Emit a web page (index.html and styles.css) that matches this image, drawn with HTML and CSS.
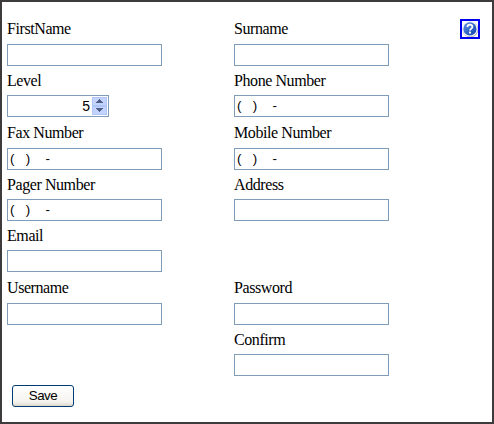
FILE: index.html
```html
<!DOCTYPE html>
<html lang="en">
<head>
<meta charset="utf-8">
<title>Registration</title>
<link rel="stylesheet" href="styles.css">
</head>
<body>
<form class="panel">
  <div class="fields">
    <label class="field first"><span class="name">FirstName</span><input class="box" type="text"></label>
    <label class="field first"><span class="name">Surname</span><input class="box" type="text"></label>
    <label class="field"><span class="name">Level</span><span class="box spinner"><span class="value">5</span><span class="arrows">
      <svg class="arrow" viewBox="0 0 15 9" shape-rendering="crispEdges"><path d="M7 2h1v1h1v1h1v1h1v1H4V5h1V4h1V3h1z"/></svg>
      <svg class="arrow" viewBox="0 0 15 9" shape-rendering="crispEdges"><path d="M4 2h7v1h-1v1H9v1H8v1H7V5H6V4H5V3H4z"/></svg>
    </span></span></label>
    <label class="field"><span class="name">Phone Number</span><input class="box" type="text" value="(   )    -"></label>
    <label class="field"><span class="name">Fax Number</span><input class="box" type="text" value="(   )    -"></label>
    <label class="field"><span class="name">Mobile Number</span><input class="box" type="text" value="(   )    -"></label>
    <label class="field"><span class="name">Pager Number</span><input class="box" type="text" value="(   )    -"></label>
    <label class="field"><span class="name">Address</span><input class="box" type="text"></label>
    <label class="field wide"><span class="name">Email</span><input class="box" type="text"></label>
    <label class="field"><span class="name">Username</span><input class="box" type="text"></label>
    <label class="field"><span class="name">Password</span><input class="box" type="password"></label>
    <label class="field second"><span class="name">Confirm</span><input class="box" type="password"></label>
  </div>
  <a class="help">
    <svg width="16" height="16" viewBox="0 0 16 16">
      <defs><linearGradient id="g" x1="0" y1="0" x2="1" y2="1"><stop offset="0" stop-color="#5e93e4"/><stop offset="1" stop-color="#0c3fae"/></linearGradient></defs>
      <rect width="16" height="16" fill="#fff"/>
      <circle cx="8.3" cy="8.4" r="8" fill="#b4b7bd"/>
      <circle cx="7.9" cy="7.9" r="7.7" fill="#f5f6f8"/>
      <circle cx="7.9" cy="7.9" r="6.6" fill="url(#g)"/>
      <path d="M5.4 6.1C5.5 2.8 10.5 2.9 10.4 5.9c0 1.7-2.4 1.8-2.4 3.7" fill="none" stroke="#fff" stroke-width="1.8"/>
      <rect x="7" y="10.6" width="2" height="1.9" fill="#fff"/>
    </svg>
  </a>
  <button class="save" type="button">Save</button>
</form>
</body>
</html>
```
FILE: styles.css
```css
* { box-sizing: border-box; }
body { margin: 0; background: #fff; }
.panel {
  width: 494px;
  height: 424px;
  border: 2px solid #3d3b3c;
  padding: 13px 12px 0 5px;
  display: grid;
  grid-template-columns: 382px 1fr;
  grid-template-rows: 361px 1fr;
  font: 16px "Liberation Serif", serif;
  color: #000;
}
.fields {
  display: grid;
  grid-template-columns: 227px 155px;
  grid-template-rows: 51px 51px 53px 51px 51px 53px 51px;
}
.field { display: flex; flex-direction: column; }
.wide { grid-column: 1 / 3; }
.second { grid-column: 2; }
.name {
  flex: 1;
  line-height: 29px;
  display: flex;
  align-items: center;
  white-space: nowrap;
  letter-spacing: -0.42px;
}
.first .name { line-height: 27px; padding-bottom: 2px; }
.box {
  width: 155px;
  height: 22px;
  border: 1px solid #7f9db9;
  border-radius: 0;
  background: #fff;
  padding: 0 2px 1px;
  outline: none;
  font: 13.33px "Liberation Sans", sans-serif;
  color: #000;
  word-spacing: 0.1px;
}
.spinner {
  width: 102px;
  display: flex;
  justify-content: flex-end;
  align-items: center;
  gap: 2px;
  padding: 1px 1px 1px 2px;
}
.value { line-height: 18px; font-size: 14px; }
.arrows { display: flex; flex-direction: column; width: 15px; height: 18px; }
.arrow {
  display: block;
  width: 15px;
  height: 9px;
  background: #c3d3fd;
  box-shadow: inset 0 0 0 1px #b0c5f8;
  fill: #4d6185;
}
.help {
  justify-self: end;
  width: 20px;
  height: 20px;
  margin-top: 4px;
  border: 2px solid #0000f0;
}
.help svg { display: block; }
.save {
  width: 62px;
  height: 22px;
  margin: 9px 0 0 5px;
  padding: 0 0 2px;
  border: 1px solid #003c74;
  border-radius: 3px;
  background: linear-gradient(#fff, #f4f3ee 80%, #dcd7cc);
  font: 13.33px "Liberation Sans", sans-serif;
  letter-spacing: -0.5px;
  color: #000;
}
```
